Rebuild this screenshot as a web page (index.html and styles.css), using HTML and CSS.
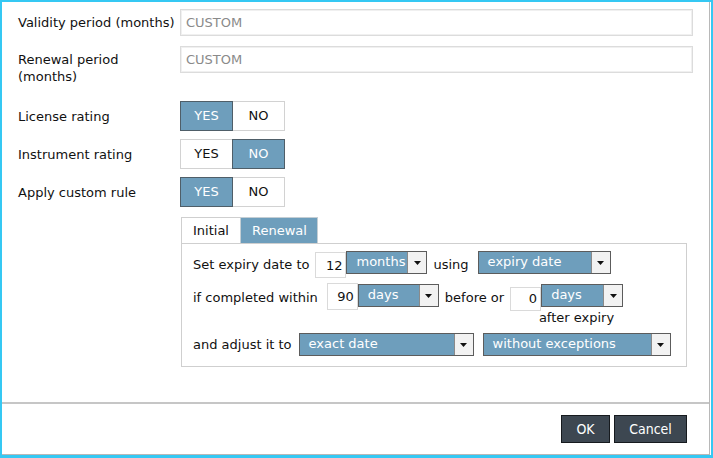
FILE: index.html
```html
<!DOCTYPE html>
<html>
<head>
<meta charset="utf-8">
<link rel="stylesheet" href="styles.css">
</head>
<body>
<div class="frame">
  <div class="dialog">
    <div class="content">
      <div class="row first">
        <div class="label">Validity period (months)</div>
        <div class="textbox">CUSTOM</div>
      </div>
      <div class="row second">
        <div class="label">Renewal period (months)</div>
        <div class="textbox">CUSTOM</div>
      </div>
      <div class="row toggle-row gap-lg">
        <div class="label">License rating</div>
        <div class="toggle"><span class="seg on">YES</span><span class="seg">NO</span></div>
      </div>
      <div class="row toggle-row">
        <div class="label">Instrument rating</div>
        <div class="toggle"><span class="seg">YES</span><span class="seg on">NO</span></div>
      </div>
      <div class="row toggle-row">
        <div class="label">Apply custom rule</div>
        <div class="toggle"><span class="seg on">YES</span><span class="seg">NO</span></div>
      </div>
      <div class="rule">
        <div class="tabs">
          <span class="tab">Initial</span><span class="tab active">Renewal</span>
        </div>
        <div class="panel">
          <div class="prow r1">
            <span class="ptext">Set expiry date to</span>
            <span class="num n12">12</span>
            <div class="select w-months"><span class="sel-text">months</span><span class="sel-arrow"><svg width="7" height="4" viewBox="0 0 7 4"><path d="M0 0h7L3.5 4z" fill="#111"/></svg></span></div>
            <span class="ptext using">using</span>
            <div class="select w-expiry"><span class="sel-text">expiry date</span><span class="sel-arrow"><svg width="7" height="4" viewBox="0 0 7 4"><path d="M0 0h7L3.5 4z" fill="#111"/></svg></span></div>
          </div>
          <div class="prow r2">
            <span class="ptext">if completed within</span>
            <span class="num n90">90</span>
            <div class="select w-days1"><span class="sel-text">days</span><span class="sel-arrow"><svg width="7" height="4" viewBox="0 0 7 4"><path d="M0 0h7L3.5 4z" fill="#111"/></svg></span></div>
            <span class="ptext before">before or</span>
            <div class="after-group">
              <div class="after-top">
                <span class="num n0">0</span>
                <div class="select w-days2"><span class="sel-text">days</span><span class="sel-arrow"><svg width="7" height="4" viewBox="0 0 7 4"><path d="M0 0h7L3.5 4z" fill="#111"/></svg></span></div>
              </div>
              <span class="after-text">after expiry</span>
            </div>
          </div>
          <div class="prow r3">
            <span class="ptext short">and adjust it to</span>
            <div class="select w-exact"><span class="sel-text">exact date</span><span class="sel-arrow"><svg width="7" height="4" viewBox="0 0 7 4"><path d="M0 0h7L3.5 4z" fill="#111"/></svg></span></div>
            <div class="select w-without"><span class="sel-text">without exceptions</span><span class="sel-arrow"><svg width="7" height="4" viewBox="0 0 7 4"><path d="M0 0h7L3.5 4z" fill="#111"/></svg></span></div>
          </div>
        </div>
      </div>
    </div>
    <div class="footer">
      <button class="btn ok">OK</button>
      <button class="btn cancel">Cancel</button>
    </div>
  </div>
</div>
</body>
</html>
```
FILE: styles.css
```css
* { box-sizing: border-box; }
html, body { margin: 0; padding: 0; background: #fff; }
body {
  font-family: "DejaVu Sans", Verdana, sans-serif;
  font-size: 13px;
  color: #111;
}
.frame {
  width: 713px;
  height: 458px;
  border: 2px solid #35c8f3;
  border-bottom-width: 3px;
  display: flex;
}
.dialog {
  flex: 1;
  margin-right: 1px;
  border-right: 1px solid #b8b8b8;
  border-bottom: 1px solid #b8b8b8;
  display: flex;
  flex-direction: column;
}
.content {
  height: 400px;
  padding: 7px 0 0 16px;
}
.row {
  display: flex;
  align-items: flex-start;
}
.row.second { margin-top: 10px; }
.row.toggle-row { margin-top: 8px; }
.row.gap-lg { margin-top: 16px; }
.label {
  width: 162px;
  flex: none;
  line-height: 17px;
  padding-top: 5px;
}
.toggle-row .label { padding-top: 7px; }
.textbox {
  width: 513px;
  height: 27px;
  border: 1px solid #dcdcdc;
  box-shadow: inset 0 0 0 1px #f0f0f0;
  color: #8a8a8a;
  padding-left: 5px;
  line-height: 25px;
}
.toggle {
  display: flex;
  height: 30px;
}
.seg {
  width: 53px;
  height: 30px;
  border: 1px solid #d2d2d2;
  background: #fff;
  color: #111;
  text-align: center;
  line-height: 28px;
}
.seg + .seg { margin-left: -1px; }
.seg.on {
  background: #6e9ebc;
  border-color: #4f5e68;
  color: #fff;
  position: relative;
}
.rule {
  margin-top: 10px;
  margin-left: 163px;
  width: 506px;
}
.tabs {
  display: flex;
  height: 26px;
}
.tab {
  padding: 0 11px 0 11px;
  height: 26px;
  line-height: 25px;
  border: 1px solid #cfcfcf;
  border-bottom: none;
  background: #fff;
}
.tab + .tab { margin-left: -1px; }
.tab.active {
  background: #6e9ebc;
  color: #fff;
  border-color: #c4ced4;
  padding: 0 10px 0 11px;
}
.panel {
  border: 1px solid #cfcfcf;
  padding: 7px 0 10px 11px;
}
.prow {
  display: flex;
  align-items: flex-start;
}
.ptext {
  line-height: 28px;
  white-space: nowrap;
}
.r1 .ptext:first-child { margin-right: 6px; }
.using { margin: 0 9px 0 6px; }
.r2 { margin-top: 5px; }
.r2 .ptext:first-child { margin-right: 9px; }
.before { margin: 0 6px; }
.r3 { margin-top: 7px; }
.r3 .ptext { line-height: 23px; margin-right: 7px; }
.num {
  width: 31px;
  border: 1px solid #dadada;
  background: #fff;
  text-align: right;
  padding-right: 3px;
  color: #111;
}
.n12 { height: 26px; line-height: 25px; margin-top: 1px; }
.n90 { height: 27px; line-height: 26px; margin-top: -1px; }
.n0 { height: 24px; line-height: 22px; margin-top: 3px; }
.select {
  display: flex;
  height: 23px;
  border: 1px solid #5c5c5c;
  background: #6e9ebc;
  color: #fff;
}
.sel-text {
  flex: 1;
  line-height: 19px;
  padding-left: 9px;
  white-space: nowrap;
  overflow: hidden;
}
.sel-arrow {
  width: 19px;
  flex: none;
  background: #f2f2f2;
  border-left: 1px solid #8a8a8a;
  display: flex;
  align-items: center;
  justify-content: center;
}
.w-months { width: 81px; }
.w-expiry { width: 133px; }
.w-days1 { width: 81px; }
.w-days2 { width: 82px; }
.w-exact { width: 175px; }
.w-without { width: 188px; margin-left: 9px; }
.after-group {
  display: flex;
  flex-direction: column;
  align-items: flex-end;
}
.after-top { display: flex; align-items: flex-start; height: 27px; }
.after-text {
  line-height: 17px;
  margin-top: -2px;
  margin-right: 9px;
}
.footer {
  flex: 1;
  border-top: 2px solid #c6c6c6;
  display: flex;
  justify-content: flex-end;
  align-items: flex-start;
  padding: 11px 22px 0 0;
  gap: 4px;
}
.btn {
  font-family: "DejaVu Sans Condensed", "DejaVu Sans", sans-serif;
  font-size: 14px;
  height: 28px;
  background: #3d4751;
  color: #fff;
  border: 1px solid #161a1e;
  padding: 0;
  margin: 0;
  line-height: 26px;
}
.btn.ok { width: 49px; }
.btn.cancel { width: 73px; }
```
